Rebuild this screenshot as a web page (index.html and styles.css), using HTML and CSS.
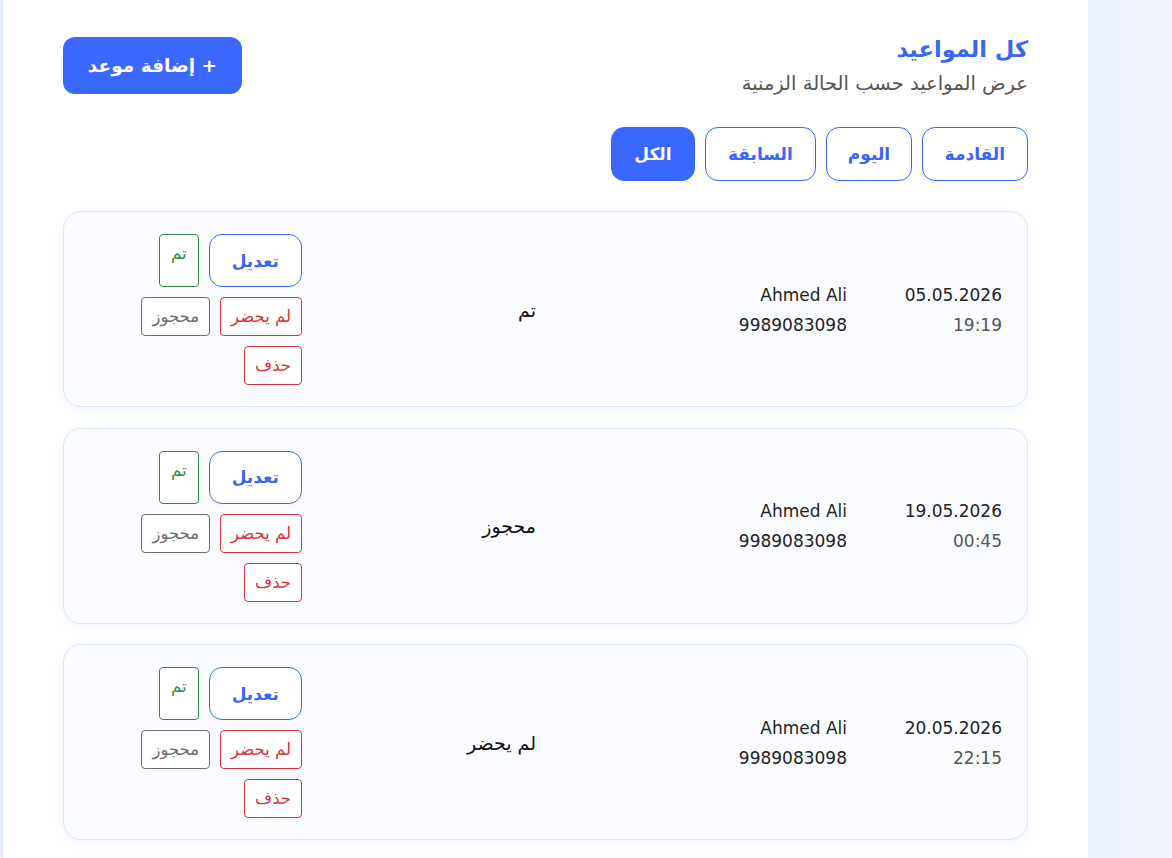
FILE: index.html
```html
<!DOCTYPE html>
<html lang="ar" dir="rtl">
<head>
<meta charset="utf-8">
<link rel="stylesheet" href="styles.css">
</head>
<body>
<div class="layout">
  <aside class="side"></aside>
  <main class="panel">
    <header class="head">
      <div class="titles">
        <h1 class="title">كل المواعيد</h1>
        <p class="sub">عرض المواعيد حسب الحالة الزمنية</p>
      </div>
      <button class="add">+ إضافة موعد</button>
    </header>
    <nav class="filters">
      <button class="flt">القادمة</button>
      <button class="flt">اليوم</button>
      <button class="flt">السابقة</button>
      <button class="flt active">الكل</button>
    </nav>
    <section class="list">
      <article class="card">
        <div class="when"><div class="date">05.05.2026</div><div class="time">19:19</div></div>
        <div class="who"><div class="name">Ahmed Ali</div><div class="phone">9989083098</div></div>
        <div class="status">تم</div>
        <div class="acts">
          <button class="edit">تعديل</button>
          <button class="sm green">تم</button>
          <button class="sm red">لم يحضر</button>
          <button class="sm gray">محجوز</button>
          <button class="sm red">حذف</button>
        </div>
      </article>
      <article class="card">
        <div class="when"><div class="date">19.05.2026</div><div class="time">00:45</div></div>
        <div class="who"><div class="name">Ahmed Ali</div><div class="phone">9989083098</div></div>
        <div class="status">محجوز</div>
        <div class="acts">
          <button class="edit">تعديل</button>
          <button class="sm green">تم</button>
          <button class="sm red">لم يحضر</button>
          <button class="sm gray">محجوز</button>
          <button class="sm red">حذف</button>
        </div>
      </article>
      <article class="card">
        <div class="when"><div class="date">20.05.2026</div><div class="time">22:15</div></div>
        <div class="who"><div class="name">Ahmed Ali</div><div class="phone">9989083098</div></div>
        <div class="status">لم يحضر</div>
        <div class="acts">
          <button class="edit">تعديل</button>
          <button class="sm green">تم</button>
          <button class="sm red">لم يحضر</button>
          <button class="sm gray">محجوز</button>
          <button class="sm red">حذف</button>
        </div>
      </article>
    </section>
  </main>
</div>
</body>
</html>
```
FILE: styles.css
```css
* { box-sizing: border-box; }
html, body { margin: 0; padding: 0; }
body {
  font-family: "DejaVu Sans", "Noto Sans", sans-serif;
  background: #eef3fe;
  color: #222;
  height: 858px;
  overflow: hidden;
}
.layout {
  display: flex;
  flex-direction: row;
  height: 858px;
  padding-left: 3px;
}
.side {
  width: 84px;
  flex: none;
  background: linear-gradient(90deg, #eaf0fd, #f2f6fe);
}
.panel {
  width: 1085px;
  flex: none;
  background: #fff;
  box-shadow: -1px 0 2px rgba(80, 100, 160, 0.12);
  padding: 33px 60px 0 60px;
}
.head {
  display: flex;
  justify-content: space-between;
  align-items: flex-start;
}
.title {
  margin: 0;
  font-size: 22.5px;
  font-weight: 700;
  color: #3a66f0;
  line-height: 32px;
}
.sub {
  margin: 6px 0 0;
  font-size: 19.5px;
  color: #555;
  line-height: 26px;
}
.add {
  margin-top: 4px;
  font-family: inherit;
  font-size: 18.5px;
  font-weight: 700;
  color: #fff;
  background: #3a67fd;
  border: none;
  border-radius: 12px;
  height: 57px;
  padding: 0 22px;
  width: 179px;
}
.filters {
  display: flex;
  gap: 10px;
  margin-top: 30px;
}
.flt {
  font-family: inherit;
  font-size: 17px;
  font-weight: 700;
  color: #3a66f5;
  background: #fff;
  border: 1px solid #3a66f5;
  border-radius: 13px;
  height: 54px;
  padding: 0 22px;
}
.flt:nth-child(2) { padding: 0 20.5px; }
.flt:nth-child(3) { padding: 0 22.5px; }
.flt.active {
  background: #3a67fd;
  color: #fff;
  border-color: #3a67fd;
  padding: 0 22px;
}
.list {
  display: flex;
  flex-direction: column;
  gap: 20.5px;
  margin-top: 30px;
}
.card {
  display: grid;
  grid-template-columns: 131px 287px 210px 1fr;
  column-gap: 24px;
  align-items: center;
  background: #fbfcff;
  border: 1px solid #dce6fa;
  border-radius: 18px;
  padding: 22px 25px;
  box-shadow: 0 4px 16px rgba(70, 110, 210, 0.06);
  height: 196px;
}
.when, .who { font-size: 17px; line-height: 30px; }
.date, .name, .phone { color: #222; }
.time { color: #555; }
.status { font-size: 19px; color: #111; }
.acts {
  display: flex;
  flex-wrap: wrap;
  gap: 10px;
  align-content: flex-start;
}
.edit {
  font-family: inherit;
  font-size: 17px;
  font-weight: 700;
  color: #3a66f5;
  background: #fff;
  border: 1px solid #3a66f5;
  border-radius: 13px;
  height: 53px;
  padding: 0 22px;
}
.sm {
  font-family: inherit;
  font-size: 16.5px;
  background: #fff;
  border: 1px solid;
  border-radius: 4px;
  padding: 8px 10px;
  line-height: 21px;
  align-self: stretch;
  display: flex;
  align-items: flex-start;
  justify-content: center;
}
.sm.green { padding: 8px 11px; }
.green { color: #2e8b4a; border-color: #2e8b4a; }
.red { color: #d63340; border-color: #d63340; }
.gray { color: #6c6c6c; border-color: #6c6c6c; }
```
